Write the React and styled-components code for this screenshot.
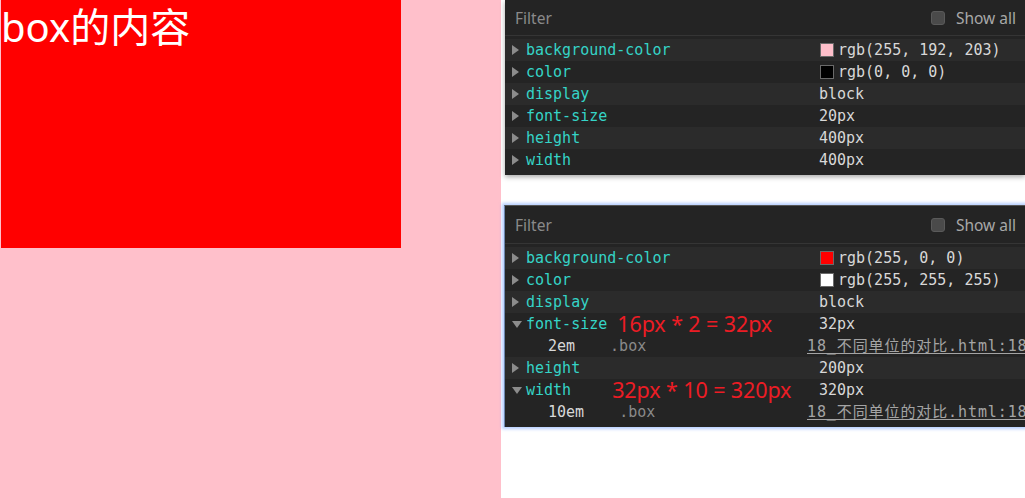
import React from 'react'
import styled, { createGlobalStyle } from 'styled-components'

const GlobalStyle = createGlobalStyle`
   html, body {
      margin: 0;
      padding: 0;
      background: #ffffff;
      overflow: hidden;
   }
`

const Page = styled.div`
   display: flex;
   width: 1025px;
   height: 498px;
   overflow: hidden;
   background: #ffffff;
`

// the inspected page, on the left
const Viewport = styled.div`
   flex-shrink: 0;
   width: 500px;
   height: 498px;
   padding-left: 1px;
   background: pink;
`

const Box = styled.div`
   width: 400px;
   height: 248px;
   padding-top: 2px;
   box-sizing: border-box;
   background: red;
   color: #ffffff;
   font-family: "Noto Sans", "Noto Sans CJK SC", sans-serif;
   font-size: 40px;
   line-height: 50px;
   white-space: nowrap;
`

const DevTools = styled.div`
   display: flex;
   flex-direction: column;
   flex: 1;
   min-width: 0;
   padding-left: 3px;
`

const Panel = styled.div`
   position: relative;
   background: #242424;
   margin-top: ${p => p.$top}px;
   margin-left: ${p => p.$focused ? 0 : 1}px;
   padding-bottom: 4px;
   border-left: ${p => p.$focused ? '1px solid #6d86ad' : 'none'};
   border-top: ${p => p.$focused ? '1px solid #555' : 'none'};
   box-shadow: ${p => p.$focused
      ? '0 0 3px 2px rgba(120, 165, 255, 0.55)'
      : '0 2px 5px rgba(0, 0, 0, 0.35)'};
`

const Header = styled.div`
   display: flex;
   align-items: center;
   justify-content: space-between;
   height: ${p => p.$height}px;
   padding: 0 9px 0 10px;
   border-bottom: 1px solid #353535;
   margin-bottom: 3px;
   font-family: "Noto Sans", sans-serif;
   font-size: 15.5px;
`

const FilterText = styled.span`
   color: #8a8a8a;
`

const ShowAll = styled.label`
   display: flex;
   align-items: center;
   gap: 11px;
   color: #a8a8a8;
`

const Checkbox = styled.span`
   width: 12px;
   height: 12px;
   border: 1px solid #5a5a5a;
   border-radius: 3px;
   background: #4a4a4a;
`

const Row = styled.div`
   display: grid;
   grid-template-columns: 14px 293px 1fr;
   align-items: center;
   height: 22px;
   padding-left: 7px;
   background: ${p => p.$light ? '#2b2b2b' : '#242424'};
   font-family: "DejaVu Sans Mono", "Noto Sans CJK SC", monospace;
   font-size: 15px;
   line-height: 22px;
   white-space: nowrap;
`

const Arrow = styled.span`
   width: 0;
   height: 0;
   ${p => p.$open ? `
      border-left: 5px solid transparent;
      border-right: 5px solid transparent;
      border-top: 7px solid #8c8c8c;
      margin-top: 1px;
   ` : `
      border-top: 5px solid transparent;
      border-bottom: 5px solid transparent;
      border-left: 7px solid #8c8c8c;
   `}
`

const Name = styled.span`
   display: flex;
   align-items: center;
   color: #35d4c7;
`

const Note = styled.span`
   margin-left: ${p => p.$offset}px;
   color: #ec1c24;
   font-family: "Noto Sans", sans-serif;
   font-size: 21.5px;
   letter-spacing: -0.1px;
`

const Value = styled.span`
   display: flex;
   align-items: center;
   color: #d8d8d8;
`

const Swatch = styled.span`
   width: 12px;
   height: 12px;
   margin: 0 4px 0 1px;
   border: 1px solid #6a6a6a;
   background: ${p => p.$color};
`

const SubName = styled.span`
   display: flex;
   padding-left: 22px;
   color: #d8d8d8;
`

const Selector = styled.span`
   margin-left: 35px;
   color: #8a8a8a;
`

const Source = styled.span`
   margin-left: -12px;
   color: #a4a4a4;
   letter-spacing: 0.9px;
   text-decoration: underline;
   text-underline-offset: 2px;
`

const firstPanel = [
   { name: 'background-color', value: 'rgb(255, 192, 203)', swatch: 'rgb(255, 192, 203)' },
   { name: 'color', value: 'rgb(0, 0, 0)', swatch: '#000' },
   { name: 'display', value: 'block' },
   { name: 'font-size', value: '20px' },
   { name: 'height', value: '400px' },
   { name: 'width', value: '400px' },
]

const secondPanel = [
   { name: 'background-color', value: 'rgb(255, 0, 0)', swatch: 'rgb(255, 0, 0)' },
   { name: 'color', value: 'rgb(255, 255, 255)', swatch: '#fff' },
   { name: 'display', value: 'block' },
   { name: 'font-size', value: '32px', note: '16px * 2 = 32px', noteOffset: 10, sub: '2em' },
   { name: 'height', value: '200px' },
   { name: 'width', value: '320px', note: '32px * 10 = 320px', noteOffset: 41, sub: '10em' },
]

const Properties = ({ rows }) => rows.map((row, i) => (
   <React.Fragment key={row.name}>
      <Row $light={i % 2 === 0}>
         <Arrow $open={!!row.sub} />
         <Name>
            {row.name}
            {row.note && <Note $offset={row.noteOffset}>{row.note}</Note>}
         </Name>
         <Value>
            {row.swatch && <Swatch $color={row.swatch} />}
            {row.value}
         </Value>
      </Row>
      {row.sub && (
         <Row $light={i % 2 === 0}>
            <span />
            <SubName>
               {row.sub}
               <Selector>.box</Selector>
            </SubName>
            <Source>18_不同单位的对比.html:18</Source>
         </Row>
      )}
   </React.Fragment>
))

const ComputedPanel = ({ rows, focused, top, headerHeight }) => (
   <Panel $focused={focused} $top={top}>
      <Header $height={headerHeight}>
         <FilterText>Filter</FilterText>
         <ShowAll>
            <Checkbox />
            Show all
         </ShowAll>
      </Header>
      <Properties rows={rows} />
   </Panel>
)

const App = () => (
   <Page>
      <GlobalStyle />
      <Viewport>
         <Box>box的内容</Box>
      </Viewport>
      <DevTools>
         <ComputedPanel rows={firstPanel} top={0} headerHeight={35} />
         <ComputedPanel rows={secondPanel} focused top={30} headerHeight={37} />
      </DevTools>
   </Page>
)

export default App
